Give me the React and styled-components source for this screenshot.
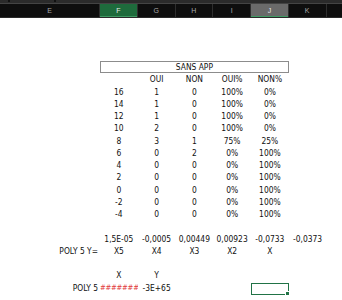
import React from "react";
import styled, { createGlobalStyle } from "styled-components";

const GlobalStyle = createGlobalStyle`
  html, body {
    margin: 0;
    padding: 0;
    background: #ffffff;
  }
  body {
    font-family: "Liberation Sans Narrow", "DejaVu Sans Condensed", "Liberation Sans", sans-serif;
  }
`;

const COLUMNS = ["E", "F", "G", "H", "I", "J", "K", ""];
const GRID = "100px repeat(7, 37.75px) 1fr";

const rows = [
  ["16", "1", "0", "100%", "0%"],
  ["14", "1", "0", "100%", "0%"],
  ["12", "1", "0", "100%", "0%"],
  ["10", "2", "0", "100%", "0%"],
  ["8", "3", "1", "75%", "25%"],
  ["6", "0", "2", "0%", "100%"],
  ["4", "0", "0", "0%", "100%"],
  ["2", "0", "0", "0%", "100%"],
  ["0", "0", "0", "0%", "100%"],
  ["-2", "0", "0", "0%", "100%"],
  ["-4", "0", "0", "0%", "100%"],
];

const App = () => {
  return (
    <Page>
      <GlobalStyle />
      <TopStrip>
        <Tab $left={8} />
        <Tab $left={54} />
      </TopStrip>
      <ColumnHeader>
        {COLUMNS.map((c, i) => (
          <HeadCell
            key={i}
            $variant={c === "F" ? "active" : c === "J" ? "selected" : "plain"}>
            {c}
          </HeadCell>
        ))}
      </ColumnHeader>

      <Sheet>
        <Spacer />

        <Row>
          <Cell />
          <TitleCell>SANS APP</TitleCell>
        </Row>

        <Row>
          <Cell />
          <Cell />
          <Cell>OUI</Cell>
          <Cell>NON</Cell>
          <Cell>OUI%</Cell>
          <Cell>NON%</Cell>
        </Row>

        {rows.map((r) => (
          <Row key={r[0]}>
            <Cell />
            {r.map((v, i) => (
              <Cell key={i}>{v}</Cell>
            ))}
          </Row>
        ))}

        <Row />

        <Row>
          <Cell />
          <Cell>1,5E-05</Cell>
          <Cell>-0,0005</Cell>
          <Cell>0,00449</Cell>
          <Cell>0,00923</Cell>
          <Cell>-0,0733</Cell>
          <Cell>-0,0373</Cell>
        </Row>

        <Row>
          <Cell $align="right">POLY 5 Y=</Cell>
          <Cell>X5</Cell>
          <Cell>X4</Cell>
          <Cell>X3</Cell>
          <Cell>X2</Cell>
          <Cell>X</Cell>
        </Row>

        <Row />

        <Row>
          <Cell />
          <Cell>X</Cell>
          <Cell>Y</Cell>
        </Row>

        <Row>
          <Cell $align="right">POLY 5</Cell>
          <Overflow>#######</Overflow>
          <Cell>-3E+65</Cell>
          <Cell />
          <Cell />
          <ActiveCell>
            <Handle />
          </ActiveCell>
        </Row>
      </Sheet>
    </Page>
  );
};

export default App;

const Page = styled.div`
  width: 342px;
  height: 300px;
  overflow: hidden;
  background: #ffffff;
  color: #111111;
`;

const TopStrip = styled.div`
  position: relative;
  height: 3px;
  background: #2b2b2b;
  border-bottom: 1px solid #444444;
`;

const Tab = styled.div`
  position: absolute;
  top: 0;
  left: ${(p) => p.$left}px;
  width: 2px;
  height: 2px;
  background: #111111;
`;

const ColumnHeader = styled.div`
  display: grid;
  grid-template-columns: ${GRID};
  height: 13px;
  background: #0e0e0e;
  border-bottom: 1px solid #2a2a2a;
`;

const HeadCell = styled.div`
  display: flex;
  align-items: center;
  justify-content: center;
  font-family: "Liberation Sans", sans-serif;
  font-size: 7px;
  border-right: 1px solid #2e2e2e;
  color: ${(p) => (p.$variant === "plain" ? "#a8a8a8" : "#e8e8e8")};
  background: ${(p) =>
    p.$variant === "active"
      ? "#1e6b3c"
      : p.$variant === "selected"
      ? "#6a6a6a"
      : "transparent"};
  box-shadow: ${(p) =>
    p.$variant === "plain" ? "none" : "inset 0 -1px 0 #3f9a63"};
`;

const Sheet = styled.div`
  display: flex;
  flex-direction: column;
  font-size: 8.4px;
`;

const Spacer = styled.div`
  height: 43px;
`;

const Row = styled.div`
  display: grid;
  grid-template-columns: ${GRID};
  height: 12.25px;
  align-items: center;
`;

const Cell = styled.div`
  text-align: ${(p) => p.$align || "center"};
  padding: ${(p) => (p.$align === "right" ? "0 2px 0 0" : "0")};
  white-space: nowrap;
  line-height: 12px;
`;

const Overflow = styled.div`
  overflow: hidden;
  text-align: center;
  white-space: nowrap;
  line-height: 12px;
  font-size: 7.6px;
  letter-spacing: -0.2px;
  color: #e23b3b;
`;

const TitleCell = styled.div`
  grid-column: span 5;
  height: 12px;
  line-height: 11px;
  text-align: center;
  border: 1px solid #8c8c8c;
  box-sizing: border-box;
`;

const ActiveCell = styled.div`
  position: relative;
  height: 12.5px;
  box-sizing: border-box;
  border: 1px solid #217346;
  margin-top: 1px;
`;

const Handle = styled.div`
  position: absolute;
  right: -2px;
  bottom: -2px;
  width: 3px;
  height: 3px;
  background: #217346;
  border: 1px solid #ffffff;
`;
